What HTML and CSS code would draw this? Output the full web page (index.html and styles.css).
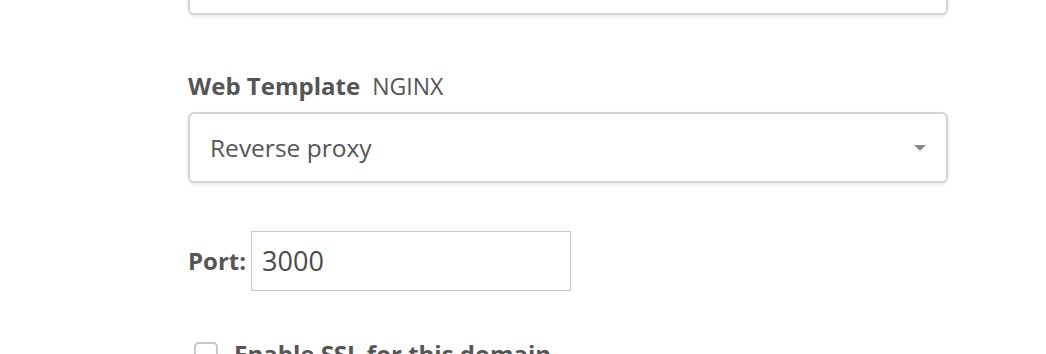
FILE: index.html
```html
<!DOCTYPE html>
<html>
<head>
  <meta charset="UTF-8">
  <title>Edit Web Domain</title>
  <link rel="stylesheet" href="styles.css">
</head>
<body>
  <div class="form">
    <div class="input-box top-box"></div>

    <div class="field">
      <label class="label">Web Template <span class="hint">NGINX</span></label>
      <div class="select-box">
        <span>Reverse proxy</span>
        <span class="caret"></span>
      </div>
    </div>

    <div class="port-row">
      <label class="label">Port:</label>
      <div class="port-input">3000</div>
    </div>

    <div class="check-row">
      <span class="checkbox"></span>
      <span class="check-label">Enable SSL for this domain</span>
    </div>
  </div>
</body>
</html>
```

FILE: styles.css
```css
* {
  margin: 0;
  padding: 0;
  box-sizing: border-box;
}

html, body {
  height: 100%;
  overflow: hidden;
}

body {
  font-family: 'Open Sans', Arial, sans-serif;
  background: #fff;
  color: #555;
}

.form {
  margin-left: 188px;
  width: 760px;
}

.input-box, .select-box {
  border: 2px solid #d3d3d3;
  border-radius: 6px;
  background: #fff;
  box-shadow: 0 2px 4px rgba(0,0,0,0.08);
}

.top-box {
  height: 70px;
  margin-top: -55px;
}

.field {
  margin-top: 55px;
}

.label {
  display: block;
  font-size: 24px;
  font-weight: 700;
  color: #555;
  line-height: 32px;
}

.hint {
  font-weight: 400;
  margin-left: 6px;
  font-size: 23px;
}

.select-box {
  margin-top: 10px;
  height: 71px;
  display: flex;
  align-items: center;
  justify-content: space-between;
  padding: 0 20px 0 20px;
  font-size: 24.5px;
}

.caret {
  width: 0;
  height: 0;
  border-left: 6px solid transparent;
  border-right: 6px solid transparent;
  border-top: 6px solid #888;
}

.port-row {
  margin-top: 48px;
  display: flex;
  align-items: center;
  gap: 5px;
}

.port-input {
  width: 320px;
  height: 60px;
  border: 1px solid #c8c8c8;
  font-size: 27px;
  font-weight: 500;
  color: #4a4a4a;
  line-height: 58px;
  padding-left: 10px;
}

.check-row {
  margin-top: 48px;
  display: flex;
  align-items: flex-start;
  gap: 16px;
  padding-left: 6px;
}

.checkbox {
  width: 24px;
  height: 24px;
  border: 2px solid #c8c8c8;
  border-radius: 5px;
  margin-top: 3px;
}

.check-label {
  font-size: 24px;
  font-weight: 700;
  line-height: 30px;
}
```
